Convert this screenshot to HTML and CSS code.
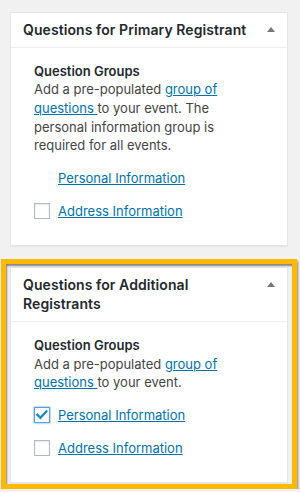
FILE: index.html
```html
<!DOCTYPE html>
<html lang="en">
<head>
<meta charset="utf-8">
<title>Questions</title>
<link rel="stylesheet" href="styles.css">
</head>
<body>
<div class="page">
  <div class="postbox">
    <div class="hndle">
      <h2 class="title">Questions for Primary Registrant</h2>
      <span class="toggle"><span class="tri"></span></span>
    </div>
    <div class="inside">
      <p class="label">Question Groups</p>
      <p class="desc">Add a pre-populated <a href="#">group of<br>questions </a>to your event. The<br>personal information group is<br>required for all events.</p>
      <ul class="groups">
        <li><span class="cb-space"></span><a href="#">Personal Information</a></li>
        <li><span class="cb"></span><a href="#">Address Information</a></li>
      </ul>
    </div>
  </div>

  <div class="highlight">
    <div class="postbox">
      <div class="hndle">
        <h2 class="title">Questions for Additional<br>Registrants</h2>
        <span class="toggle"><span class="tri"></span></span>
      </div>
      <div class="inside">
        <p class="label">Question Groups</p>
        <p class="desc">Add a pre-populated <a href="#">group of<br>questions </a>to your event.</p>
        <ul class="groups">
          <li><span class="cb checked"><svg viewBox="0 0 16 16" width="14" height="14"><polyline points="2.6,7.6 6.2,11.2 13,3.8" fill="none" stroke="#1e8cbe" stroke-width="2.6" stroke-linecap="square"/></svg></span><a href="#">Personal Information</a></li>
          <li><span class="cb"></span><a href="#">Address Information</a></li>
        </ul>
      </div>
    </div>
  </div>
</div>
</body>
</html>
```

FILE: styles.css
```css
html, body {
  margin: 0;
  padding: 0;
  background: #f1f1f1;
}
body {
  font-family: Inter, "Noto Sans", Roboto, sans-serif;
  color: #444;
  font-size: 13px;
}
.page {
  padding-top: 12px;
}
.postbox {
  box-sizing: border-box;
  width: 278px;
  margin-left: 10px;
  background: #fff;
  border: 1px solid #e5e5e5;
  box-shadow: 0 1px 1px rgba(0, 0, 0, 0.04);
}
.hndle {
  display: flex;
  align-items: flex-start;
  justify-content: space-between;
  padding: 7px 12px 7px 12px;
  border-bottom: 1px solid #eee;
}
.title {
  margin: 0;
  font-size: 14px;
  font-weight: 600;
  line-height: 19.6px;
  letter-spacing: 0.08px;
  color: #23282d;
}
.toggle {
  display: flex;
  align-items: center;
  height: 19.6px;
}
.tri {
  width: 0;
  height: 0;
  border-left: 4px solid transparent;
  border-right: 4px solid transparent;
  border-bottom: 5px solid #72777c;
}
.inside {
  padding: 14px 12px 24px 23px;
}
.label {
  margin: 0;
  font-weight: 600;
  color: #23282d;
  line-height: 18.7px;
}
.desc {
  margin: 0;
  line-height: 18.7px;
  white-space: nowrap;
}
a {
  color: #0073aa;
  text-decoration: underline;
}
.groups {
  list-style: none;
  margin: 12.6px 0 0 0;
  padding: 0;
  display: flex;
  flex-direction: column;
  gap: 13px;
}
.groups li {
  display: flex;
  align-items: center;
  height: 20px;
  line-height: 20px;
}
.cb, .cb-space {
  box-sizing: border-box;
  width: 16px;
  height: 16px;
  margin-right: 8px;
  flex: none;
}
.cb {
  border: 1px solid #b4b9be;
  background: #fff;
  box-shadow: inset 0 1px 2px rgba(0, 0, 0, 0.1);
  display: flex;
  align-items: center;
  justify-content: center;
}
.cb.checked {
  border-color: #5b9dd9;
  box-shadow: 0 0 2px rgba(30, 140, 190, 0.8);
}
.highlight {
  box-sizing: border-box;
  width: 296px;
  margin: 13px 0 0 1px;
  border: 5px solid #ffb900;
  padding: 3px 0 1px 0;
  box-shadow: 1px 2px 2px rgba(0, 0, 0, 0.45), inset 1px 2px 2px rgba(0, 0, 0, 0.45);
}
.highlight .postbox {
  margin-left: 4px;
}
```
